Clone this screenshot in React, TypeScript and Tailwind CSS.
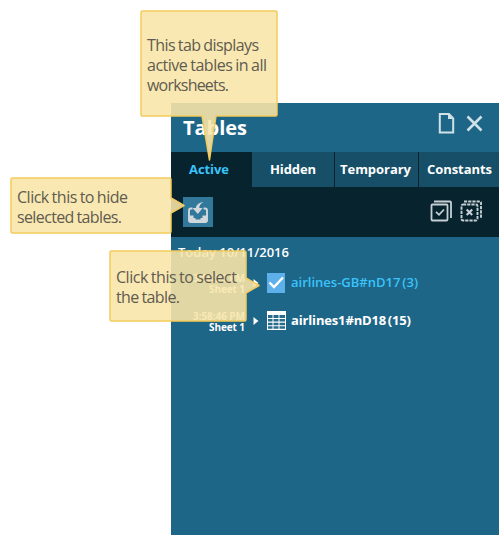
import React from "react";

const tabs = [
  { label: "Active", cell: "w-[81px] pr-[5px] bg-[#06232e] text-[#3ac3fb]", width: 40 },
  { label: "Hidden", cell: "w-[82px] bg-[#174f69] text-white", width: 46 },
  { label: "Temporary", cell: "w-[84px] border-l border-[#06232e] bg-[#174f69] text-white pr-[2px]", width: 71 },
  { label: "Constants", cell: "w-[81px] border-l border-[#06232e] bg-[#174f69] text-white", width: 65 },
];

/* A single line of text set to a fixed advance width. */
function Line({ children, width, size, weight = 400, height, baseline, tight = 0 }: {
  children: string; width: number; size: number; weight?: number; height: number; baseline: number; tight?: number;
}) {
  return (
    <svg width={width} height={height} className="block shrink-0 overflow-visible">
      <text x="0" y={baseline} textLength={width} lengthAdjust="spacing" fill="currentColor" fontSize={size} fontWeight={weight} wordSpacing={-tight}>
        {children}
      </text>
    </svg>
  );
}

function Callout({ className, path, lines }: {
  className: string; path: string; lines: { text: string; width: number }[];
}) {
  return (
    <div className={`absolute text-[#5f5b50] ${className}`}>
      <svg width="1" height="1" className="absolute left-0 top-0 overflow-visible">
        <path d={path} fill="#f8e5a9" fillOpacity="0.89" stroke="#f3cb5c" strokeWidth="1.5" strokeLinejoin="round" />
      </svg>
      <div className="relative">
        {lines.map((l) => (
          <Line key={l.text} width={l.width} size={16} height={20} baseline={15} tight={0.8}>{l.text}</Line>
        ))}
      </div>
    </div>
  );
}

function Row({ time, active, name, width }: { time: string; active?: boolean; name: string; width: number }) {
  return (
    <div className="flex h-[38px] items-start text-white">
      <div className="flex w-[74px] flex-col items-end">
        <Line width={52} size={10} weight={700} height={11} baseline={9}>{time}</Line>
        <Line width={36} size={10} weight={700} height={12} baseline={9}>Sheet 1</Line>
      </div>
      <svg width="6" height="10" className="ml-2 mt-[5px]"><path d="M.5 1 5.5 5 .5 9z" fill="white" /></svg>
      {active ? (
        <svg width="18" height="20" viewBox="0 0 18 20" className="ml-2">
          <path d="M0 0h18v20H0z" fill="#5db0e9" />
          <path d="m2.5 9.5 4.5 4.5 9-9.5" fill="none" stroke="white" strokeWidth="2.4" />
        </svg>
      ) : (
        <svg width="19" height="19" viewBox="0 0 19 19" className="ml-2">
          <path d="M0 0h19v19H0z" fill="white" />
          <path d="M1 4h4.5v3H1zM6.5 4h5v3h-5zM12.5 4H18v3h-5.5zM1 8h4.5v2.5H1zM6.5 8h5v2.5h-5zM12.5 8H18v2.5h-5.5zM1 11.7h4.5v2.5H1zM6.5 11.7h5v2.5h-5zM12.5 11.7H18v2.5h-5.5zM1 15.3h4.5v2.5H1zM6.5 15.3h5v2.5h-5zM12.5 15.3H18v2.5h-5.5z" fill="#276c8b" />
        </svg>
      )}
      <div className={active ? "ml-1.5 text-[#3ac3fb]" : "ml-[5px]"}>
        <Line width={width} size={13} weight={active ? 600 : 700} height={18} baseline={14} tight={1.5}>{name}</Line>
      </div>
    </div>
  );
}

export default function App() {
  return (
    <div className="relative h-[535px] w-[499px] overflow-hidden bg-white pl-[171px] pt-[103px] font-['Open_Sans','Noto_Sans',sans-serif]">
      <main className="h-[432px] w-[328px] bg-[#1e6687]">
        <header className="flex h-[49px] items-start pl-3 text-white">
          <div className="pt-2"><Line width={64} size={20} weight={700} height={28} baseline={24}>Tables</Line></div>
          <div className="ml-auto flex gap-[11px] pr-4 pt-2.5">
            <svg width="17" height="21" viewBox="0 0 17 21" fill="none" stroke="#d0e1e8">
              <path d="M1.8 1h9.2l4.2 4.3v14.2H1.8z" strokeWidth="2" />
              <path d="M10 0v6h6z" fill="#d0e1e8" stroke="none" />
            </svg>
            <svg width="17" height="21" viewBox="0 0 17 21" fill="none" stroke="#d0e1e8" strokeWidth="2.6">
              <path d="m1.500 3.500 14 14m0-14-14 14" />
            </svg>
          </div>
        </header>
        <nav className="flex h-[35px]">
          {tabs.map((t) => (
            <div key={t.label} className={`flex items-start justify-center pt-[7px] ${t.cell}`}>
              <Line width={t.width} size={13} weight={700} height={18} baseline={15}>{t.label}</Line>
            </div>
          ))}
        </nav>
        <div className="flex h-[50px] items-start bg-[#06232e] pl-3 pt-[10px]">
          <div className="h-[30px] w-[30px] bg-[#32789a]">
            <svg width="30" height="30" viewBox="0 0 30 30">
              <path d="M9.5 11.5H8a2 2 0 0 0-2 2v10A1.5 1.5 0 0 0 7.5 25h15a1.5 1.5 0 0 0 1.5-1.5v-10a2 2 0 0 0-2-2h-1.5" fill="none" stroke="#d1d8db" strokeWidth="1.9" />
              <path d="M6 18.500h4.500V21h2v1.500h5V21h2v-2.500H24V25H6z" fill="#d1d8db" />
              <path d="M20.500 5c-4.500.500-7.300 3-7.700 6H9.500l5.300 6 4.800-6h-3.300c0-2.500 1.200-4.500 4.200-6z" fill="#d1d8db" />
            </svg>
          </div>
          <div className="ml-auto flex gap-[8px] pr-[17px] pt-[3px]">
            <svg width="22" height="22" viewBox="0 0 22 22" fill="none" stroke="#c6d0d4" strokeWidth="1.8">
              <rect x="1.5" y="4.5" width="16" height="16" rx="1" />
              <path d="M4 1.500h16a1 1 0 0 1 1 1v15.500" />
              <path d="m6 11.800 3 3 5-5.300" />
            </svg>
            <svg width="22" height="22" viewBox="0 0 22 22" fill="none" stroke="#c6d0d4" strokeWidth="1.9">
              <rect x="1.5" y="4.5" width="16" height="16" rx="1.5" strokeDasharray="3.2 1" />
              <path d="M4 1.500h16a1 1 0 0 1 1 1v15.500" strokeDasharray="3.2 1" />
              <path d="m6.700 9.500 5.500 5.500m0-5.500-5.500 5.500" strokeWidth="2.2" />
            </svg>
          </div>
        </div>
        <section className="pl-[7px] pt-[6px] text-white">
          <Line width={111} size={13} weight={600} height={18} baseline={14}>Today 10/11/2016</Line>
        </section>
        <section className="pt-3">
          <Row active time="3:58:50 PM" name="airlines-GB#nD17 (3)" width={127} />
          <Row time="3:58:46 PM" name="airlines1#nD18 (15)" width={120} />
        </section>
      </main>

      <Callout className="left-[147px] top-9"
        path="M-4.5-25H128.5Q130-25 130-23.5V78.5Q130 80 128.5 80H69L62.5 124 55 80H-4.5Q-6 80-6 78.5V-23.5Q-6-25-4.5-25Z"
        lines={[{ text: "This tab displays", width: 112 }, { text: "active tables in all", width: 120 }, { text: "worksheets.", width: 82 }]} />
      <Callout className="left-[17px] top-[188px]"
        path="M-4.5-10H152.5Q154-10 154-8.5V10L167 17.5 154 25V43.5Q154 45 152.5 45H-4.5Q-6 45-6 43.5V-8.5Q-6-10-4.5-10Z"
        lines={[{ text: "Click this to hide", width: 111 }, { text: "selected tables.", width: 105 }]} />
      <Callout className="left-[116px] top-[268px]"
        path="M-4.5-17H128.5Q130-17 130-15.5V10L143 17.5 130 25V51.5Q130 53 128.5 53H-4.5Q-6 53-6 51.5V-15.5Q-6-17-4.5-17Z"
        lines={[{ text: "Click this to select", width: 121 }, { text: "the table.", width: 64 }]} />
    </div>
  );
}
